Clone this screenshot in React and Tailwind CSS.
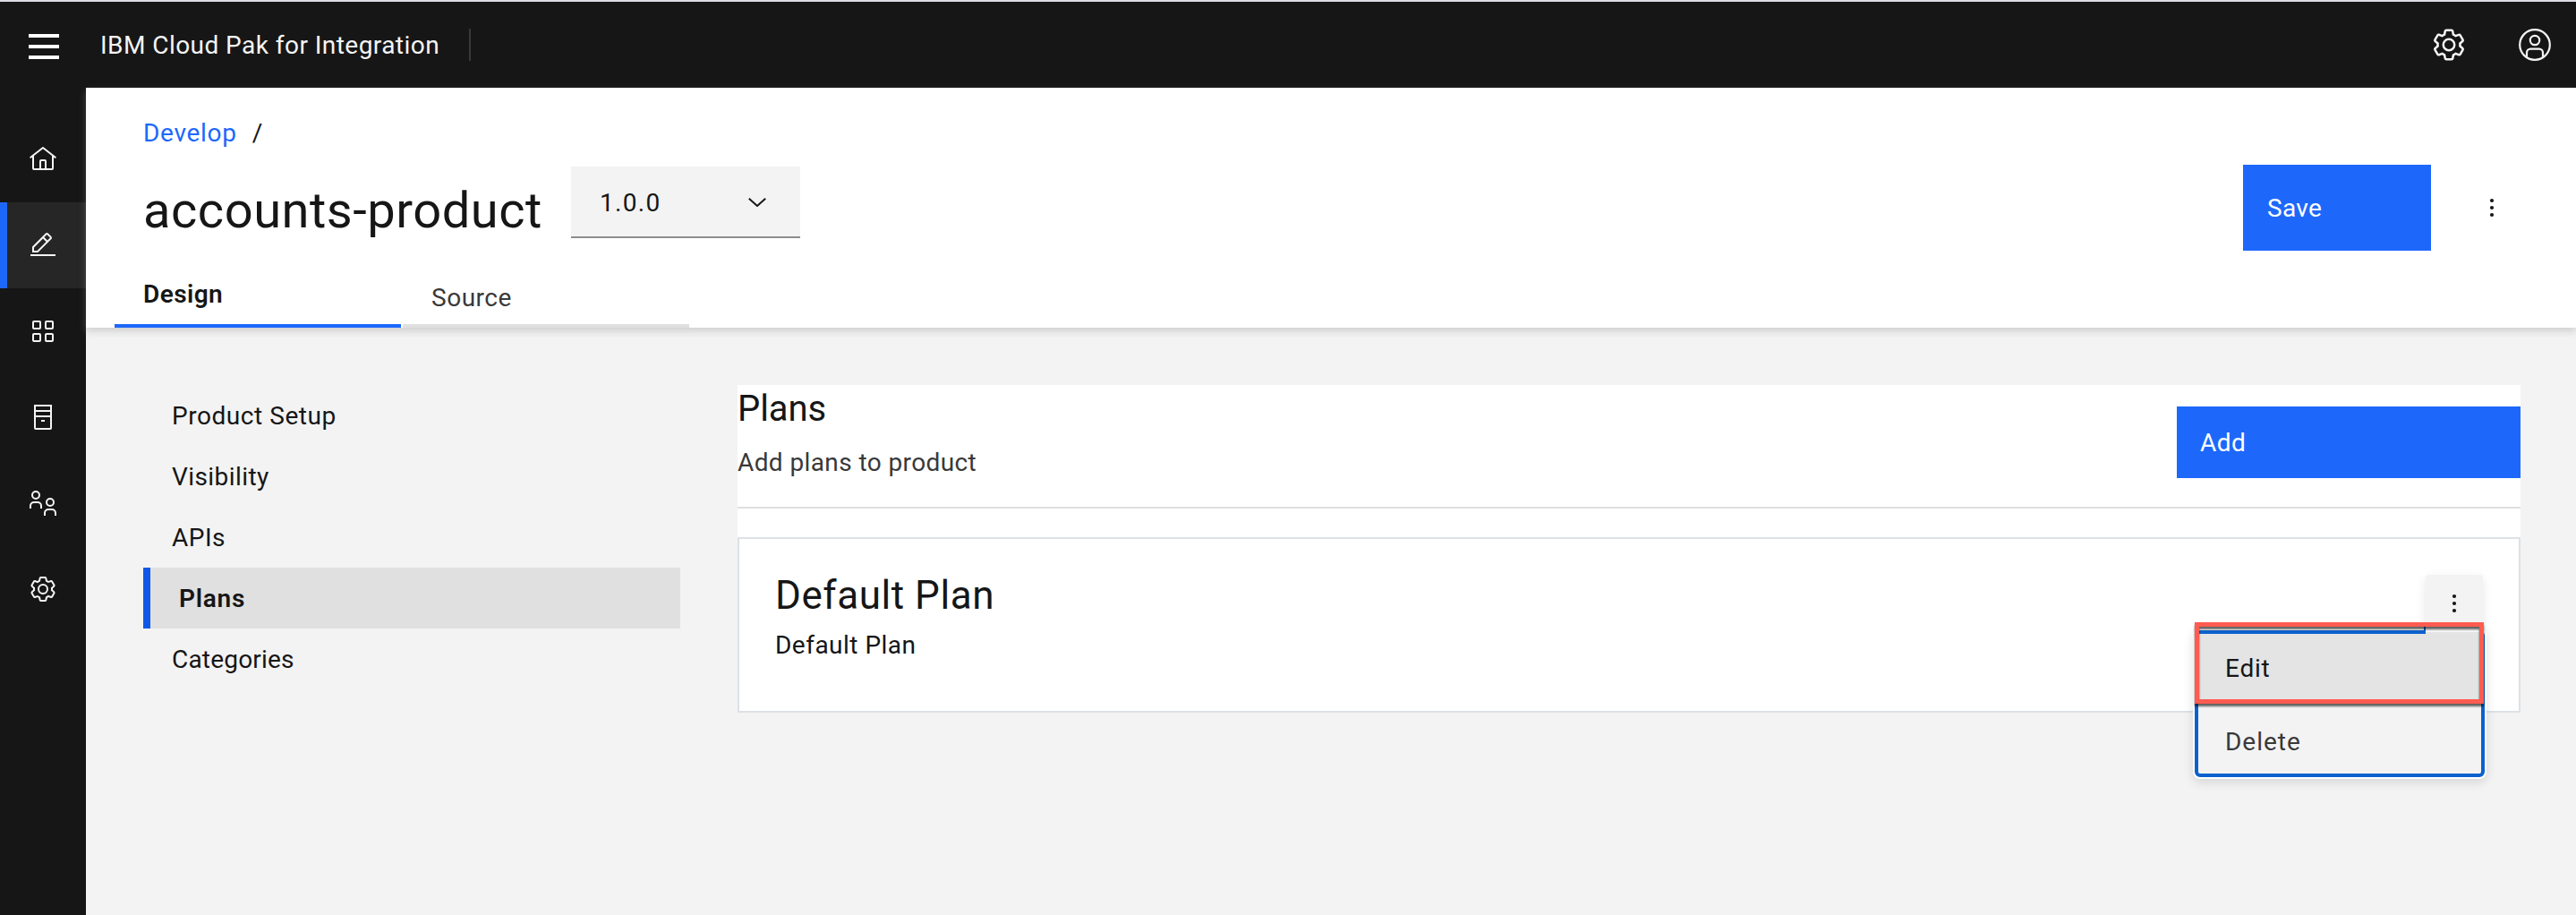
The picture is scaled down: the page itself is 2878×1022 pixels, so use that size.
const GEAR =
  "M27,16.76c0-.25,0-.5,0-.76s0-.51,0-.77l1.92-1.68A2,2,0,0,0,29.3,11L26.94,7a2,2,0,0,0-1.73-1,2,2,0,0,0-.64.1l-2.43.82a11.35,11.35,0,0,0-1.31-.75l-.51-2.52a2,2,0,0,0-2-1.61H13.64a2,2,0,0,0-2,1.61l-.51,2.52a11.48,11.48,0,0,0-1.32.75L7.43,6.06A2,2,0,0,0,6.79,6,2,2,0,0,0,5.06,7L2.7,11a2,2,0,0,0,.41,2.51L5,15.24c0,.25,0,.5,0,.76s0,.51,0,.77L3.11,18.45A2,2,0,0,0,2.7,21L5.06,25a2,2,0,0,0,1.73,1,2,2,0,0,0,.64-.1l2.43-.82a11.35,11.35,0,0,0,1.31.75l.51,2.52a2,2,0,0,0,2,1.61h4.72a2,2,0,0,0,2-1.61l.51-2.52a11.48,11.48,0,0,0,1.32-.75l2.42.82a2,2,0,0,0,.64.1,2,2,0,0,0,1.73-1L29.3,21a2,2,0,0,0-.41-2.51ZM25.21,24l-3.43-1.16a8.86,8.86,0,0,1-2.71,1.57L18.36,28H13.64l-.71-3.55a9.36,9.36,0,0,1-2.7-1.57L6.79,24,4.43,20l2.72-2.4a8.9,8.9,0,0,1,0-3.13L4.43,12,6.79,8l3.43,1.16a8.86,8.86,0,0,1,2.71-1.57L13.64,4h4.72l.71,3.55a9.36,9.36,0,0,1,2.7,1.57L25.21,8,27.57,12l-2.72,2.4a8.9,8.9,0,0,1,0,3.13L27.57,20Z";

function Gear({ className }) {
  return (
    <svg viewBox="0 0 32 32" className={className} fill="currentColor">
      <path d={GEAR} />
      <circle cx="16" cy="16" r="5" fill="none" stroke="currentColor" strokeWidth="2" />
    </svg>
  );
}

function Home() {
  return (
    <svg viewBox="0 0 32 32" className="size-8" fill="currentColor">
      <path d="M16.6123,2.2138a1.01,1.01,0,0,0-1.2427,0L1,13.4194l1.2427,1.5717L4,13.621V26a2.0041,2.0041,0,0,0,2,2H26a2.0037,2.0037,0,0,0,2-2V13.6282L29.7573,15,31,13.4282ZM18,26H14V18h4Zm2,0V18a2.0023,2.0023,0,0,0-2-2H14a2.002,2.002,0,0,0-2,2v8H6V12.0615l10-7.79,10,7.8005V26Z" />
    </svg>
  );
}

function Edit() {
  return (
    <svg viewBox="0 0 32 32" className="size-8" fill="currentColor">
      <path d="M2 26H30V28H2z" />
      <path d="M25.4,9c.8-.8.8-2,0-2.8l-3.6-3.6c-.8-.8-2-.8-2.8,0l-15,15V24h6.4L25.4,9zM20.4,4L24,7.6l-3,3L17.4,7L20.4,4zM6,22v-3.6l10-10l3.6,3.6l-10,10H6z" />
    </svg>
  );
}

function Apps() {
  return (
    <svg viewBox="0 0 32 32" className="size-8" fill="none" stroke="currentColor" strokeWidth="2">
      <rect x="5" y="5" width="8" height="8" rx="1" />
      <rect x="19" y="5" width="8" height="8" rx="1" />
      <rect x="5" y="19" width="8" height="8" rx="1" />
      <rect x="19" y="19" width="8" height="8" rx="1" />
    </svg>
  );
}

function Catalog() {
  return (
    <svg viewBox="0 0 32 32" className="size-8" fill="none" stroke="currentColor" strokeWidth="2">
      <path d="M7 3H25V28a1 1 0 0 1-1 1H8a1 1 0 0 1-1-1ZM7 9H25M7 15H25M14 20H18" />
    </svg>
  );
}

function Members() {
  return (
    <svg viewBox="0 0 32 32" className="size-8" fill="none" stroke="currentColor" strokeWidth="2">
      <circle cx="8" cy="7" r="4" />
      <path d="M2 22v-3a4 4 0 0 1 4-4h4a4 4 0 0 1 4 4v3" />
      <circle cx="24" cy="15" r="4" />
      <path d="M18 30v-3a4 4 0 0 1 4-4h4a4 4 0 0 1 4 4v3" />
    </svg>
  );
}

function Avatar() {
  return (
    <svg viewBox="0 0 20 20" className="size-10" fill="none" stroke="currentColor" strokeWidth="1.1">
      <circle cx="10" cy="10" r="8.4" />
      <circle cx="10" cy="7.5" r="2.6" />
      <path d="M5.5 16.8v-2.4a2.1 2.1 0 0 1 2.1-2.1h4.8a2.1 2.1 0 0 1 2.1 2.1v2.4" />
    </svg>
  );
}

function Kebab() {
  return (
    <svg viewBox="0 0 32 32" className="size-8" fill="#161616">
      <circle cx="16" cy="8" r="2.1" />
      <circle cx="16" cy="16" r="2.1" />
      <circle cx="16" cy="24" r="2.1" />
    </svg>
  );
}

const rail = [
  { id: "home", icon: <Home /> },
  { id: "develop", icon: <Edit />, active: true },
  { id: "apps", icon: <Apps /> },
  { id: "catalog", icon: <Catalog /> },
  { id: "members", icon: <Members /> },
  { id: "settings", icon: <Gear className="size-8" /> },
];

const sections = [
  { label: "Product Setup", cls: "tracking-[0.55px]" },
  { label: "Visibility", cls: "tracking-[0.42px]" },
  { label: "APIs", cls: "tracking-[0.49px]" },
  { label: "Plans", active: true, cls: "tracking-[0.77px]" },
  { label: "Categories", cls: "tracking-[0.19px]" },
];

function TopBar() {
  return (
    <header className="flex h-[98px] shrink-0 items-center border-t-2 border-[#dcdce4] bg-[#161616] text-[#f4f4f4]">
      <div className="mt-1 ml-8 flex w-[34px] flex-col gap-2">
        <span className="h-1 bg-white" />
        <span className="h-1 bg-white" />
        <span className="h-1 bg-white" />
      </div>
      <span className="ml-[46px] w-[412px] pt-0.5 tracking-[0.45px]">IBM Cloud Pak for Integration</span>
      <span className="h-9 w-0.5 bg-[#393939]" />
      <div className="mr-[26px] ml-auto flex gap-14">
        <Gear className="size-10" />
        <Avatar />
      </div>
    </header>
  );
}

function PageHeader() {
  return (
    <div className="relative z-10 flex h-[268px] shrink-0 flex-col bg-white shadow-[0_4px_8px_0_rgba(149,149,149,0.38)]">
      <div className="flex gap-[17px] pt-[33px] pl-16">
        <span className="tracking-[0.7px] text-[#1d68fb]">Develop</span>
        <span>/</span>
      </div>
      <div className="mt-[13px] flex h-24 items-start pl-16">
        <h1 className="mt-[23px] w-[478px] text-[56px] leading-[64px] tracking-[0.53px]">accounts-product</h1>
        <div className="mt-1.5 flex h-20 w-64 items-center border-b-2 border-[#8d8d8d] bg-[#f3f3f3] pr-[38px] pl-8">
          <span className="pt-1 tracking-[1.3px]">1.0.0</span>
          <svg viewBox="0 0 20 10" className="mt-0.5 ml-auto h-2.5 w-5" fill="none" stroke="#161616" strokeWidth="2">
            <path d="M0.8 0.8L10 9L19.2 0.8" />
          </svg>
        </div>
        <div className="mt-1 mr-[78px] ml-auto flex items-center gap-[52px]">
          <button className="h-24 w-[210px] bg-[#1d68fb] pt-0.5 pl-[27px] text-left tracking-[0.32px] text-white">Save</button>
          <Kebab />
        </div>
      </div>
      <div className="mt-auto ml-8 flex gap-0.5">
        <div className="h-[58px] w-80 border-b-4 border-[#1d68fb] pl-8 font-semibold tracking-[0.42px]">
          <div className="pt-[3px]">Design</div>
        </div>
        <div className="h-[58px] w-80 border-b-4 border-[#e0e0e0] pl-8 tracking-[0.52px] text-[#393939]">
          <div className="pt-[7px]">Source</div>
        </div>
      </div>
    </div>
  );
}

function ActionMenu() {
  return (
    <div className="relative mt-10 mr-10 ml-auto size-16">
      <div className="flex size-16 items-center justify-center rounded-t bg-[#f3f3f3] shadow-[0_4px_12px_rgba(0,0,0,0.1)]">
        <Kebab />
      </div>
      <div className="absolute top-[60px] -right-1 w-[328px] rounded-lg bg-white p-0.5 shadow-[0_4px_12px_rgba(0,0,0,0.12)]">
        <div className="h-[164px] rounded-md border-4 border-[#0c62cd] bg-[#f3f3f3]">
          <div className="h-[76px] bg-[#e4e4e4] pt-[21px] pl-[30px] tracking-[0.75px]">Edit</div>
          <div className="pt-[27px] pl-[30px] tracking-[0.99px] text-[#393939]">Delete</div>
        </div>
        <div className="absolute -top-0.5 right-1.5 h-2 w-[62px] bg-[#f6f6f6]">
          <div className="absolute top-1.5 left-0 h-1 w-[62px] bg-[#e4e4e4]" />
          <div className="absolute top-0 -left-0.5 h-1.5 w-0.5 bg-[#0c62cd]" />
        </div>
      </div>
      <div className="absolute top-[53px] -right-px h-[91px] w-[323px] border-5 border-[#ff5b50] drop-shadow-[0_3px_1px_rgba(0,0,0,0.6)]" />
    </div>
  );
}

export default function App() {
  return (
    <div className="flex h-[1022px] w-[2878px] flex-col overflow-hidden bg-[#f3f3f3] font-['Roboto',sans-serif] text-[28px] leading-9 text-[#161616]">
      <TopBar />
      <div className="flex min-h-0 flex-1">
        <nav className="w-24 shrink-0 bg-[#161616] pt-8 text-[#f4f4f4]">
          {rail.map((r) => (
            <div
              key={r.id}
              className={
                r.active
                  ? "flex h-24 items-center justify-center border-l-8 border-[#1d68fb] bg-[#262626] pr-2"
                  : "flex h-24 items-center justify-center"
              }
            >
              {r.icon}
            </div>
          ))}
        </nav>
        <div className="flex flex-1 flex-col">
          <PageHeader />
          <div className="flex items-start pt-16 pr-[62px] pl-16">
            <div className="w-[600px] shrink-0">
              {sections.map((s) => (
                <div
                  key={s.label}
                  className={
                    s.active
                      ? "flex h-[68px] items-center border-l-8 border-[#1059e6] bg-[#e0e0e0] pt-0.5 pl-8 font-semibold"
                      : "flex h-[68px] items-center pt-0.5 pl-8"
                  }
                >
                  <span className={s.cls}>{s.label}</span>
                </div>
              ))}
            </div>
            <div className="ml-16 flex-1 bg-white">
              <div className="flex h-[138px] border-b-2 border-[#e0e0e0]">
                <div>
                  <h2 className="pt-0.5 text-[40px] leading-[50px] tracking-[-0.08px]">Plans</h2>
                  <p className="mt-[17px] tracking-[0.4px] text-[#393939]">Add plans to product</p>
                </div>
                <button className="mt-6 ml-auto h-20 w-96 bg-[#1d68fb] pt-0.5 pl-[26px] text-left tracking-[0.47px] text-white">Add</button>
              </div>
              <div className="mt-8 flex h-[196px] border-2 border-[#dde1e6]">
                <div className="pl-10">
                  <h3 className="pt-[37px] text-[44px] leading-[52px] tracking-[0.55px]">Default Plan</h3>
                  <p className="mt-3 tracking-[0.48px]">Default Plan</p>
                </div>
                <ActionMenu />
              </div>
            </div>
          </div>
        </div>
      </div>
    </div>
  );
}
